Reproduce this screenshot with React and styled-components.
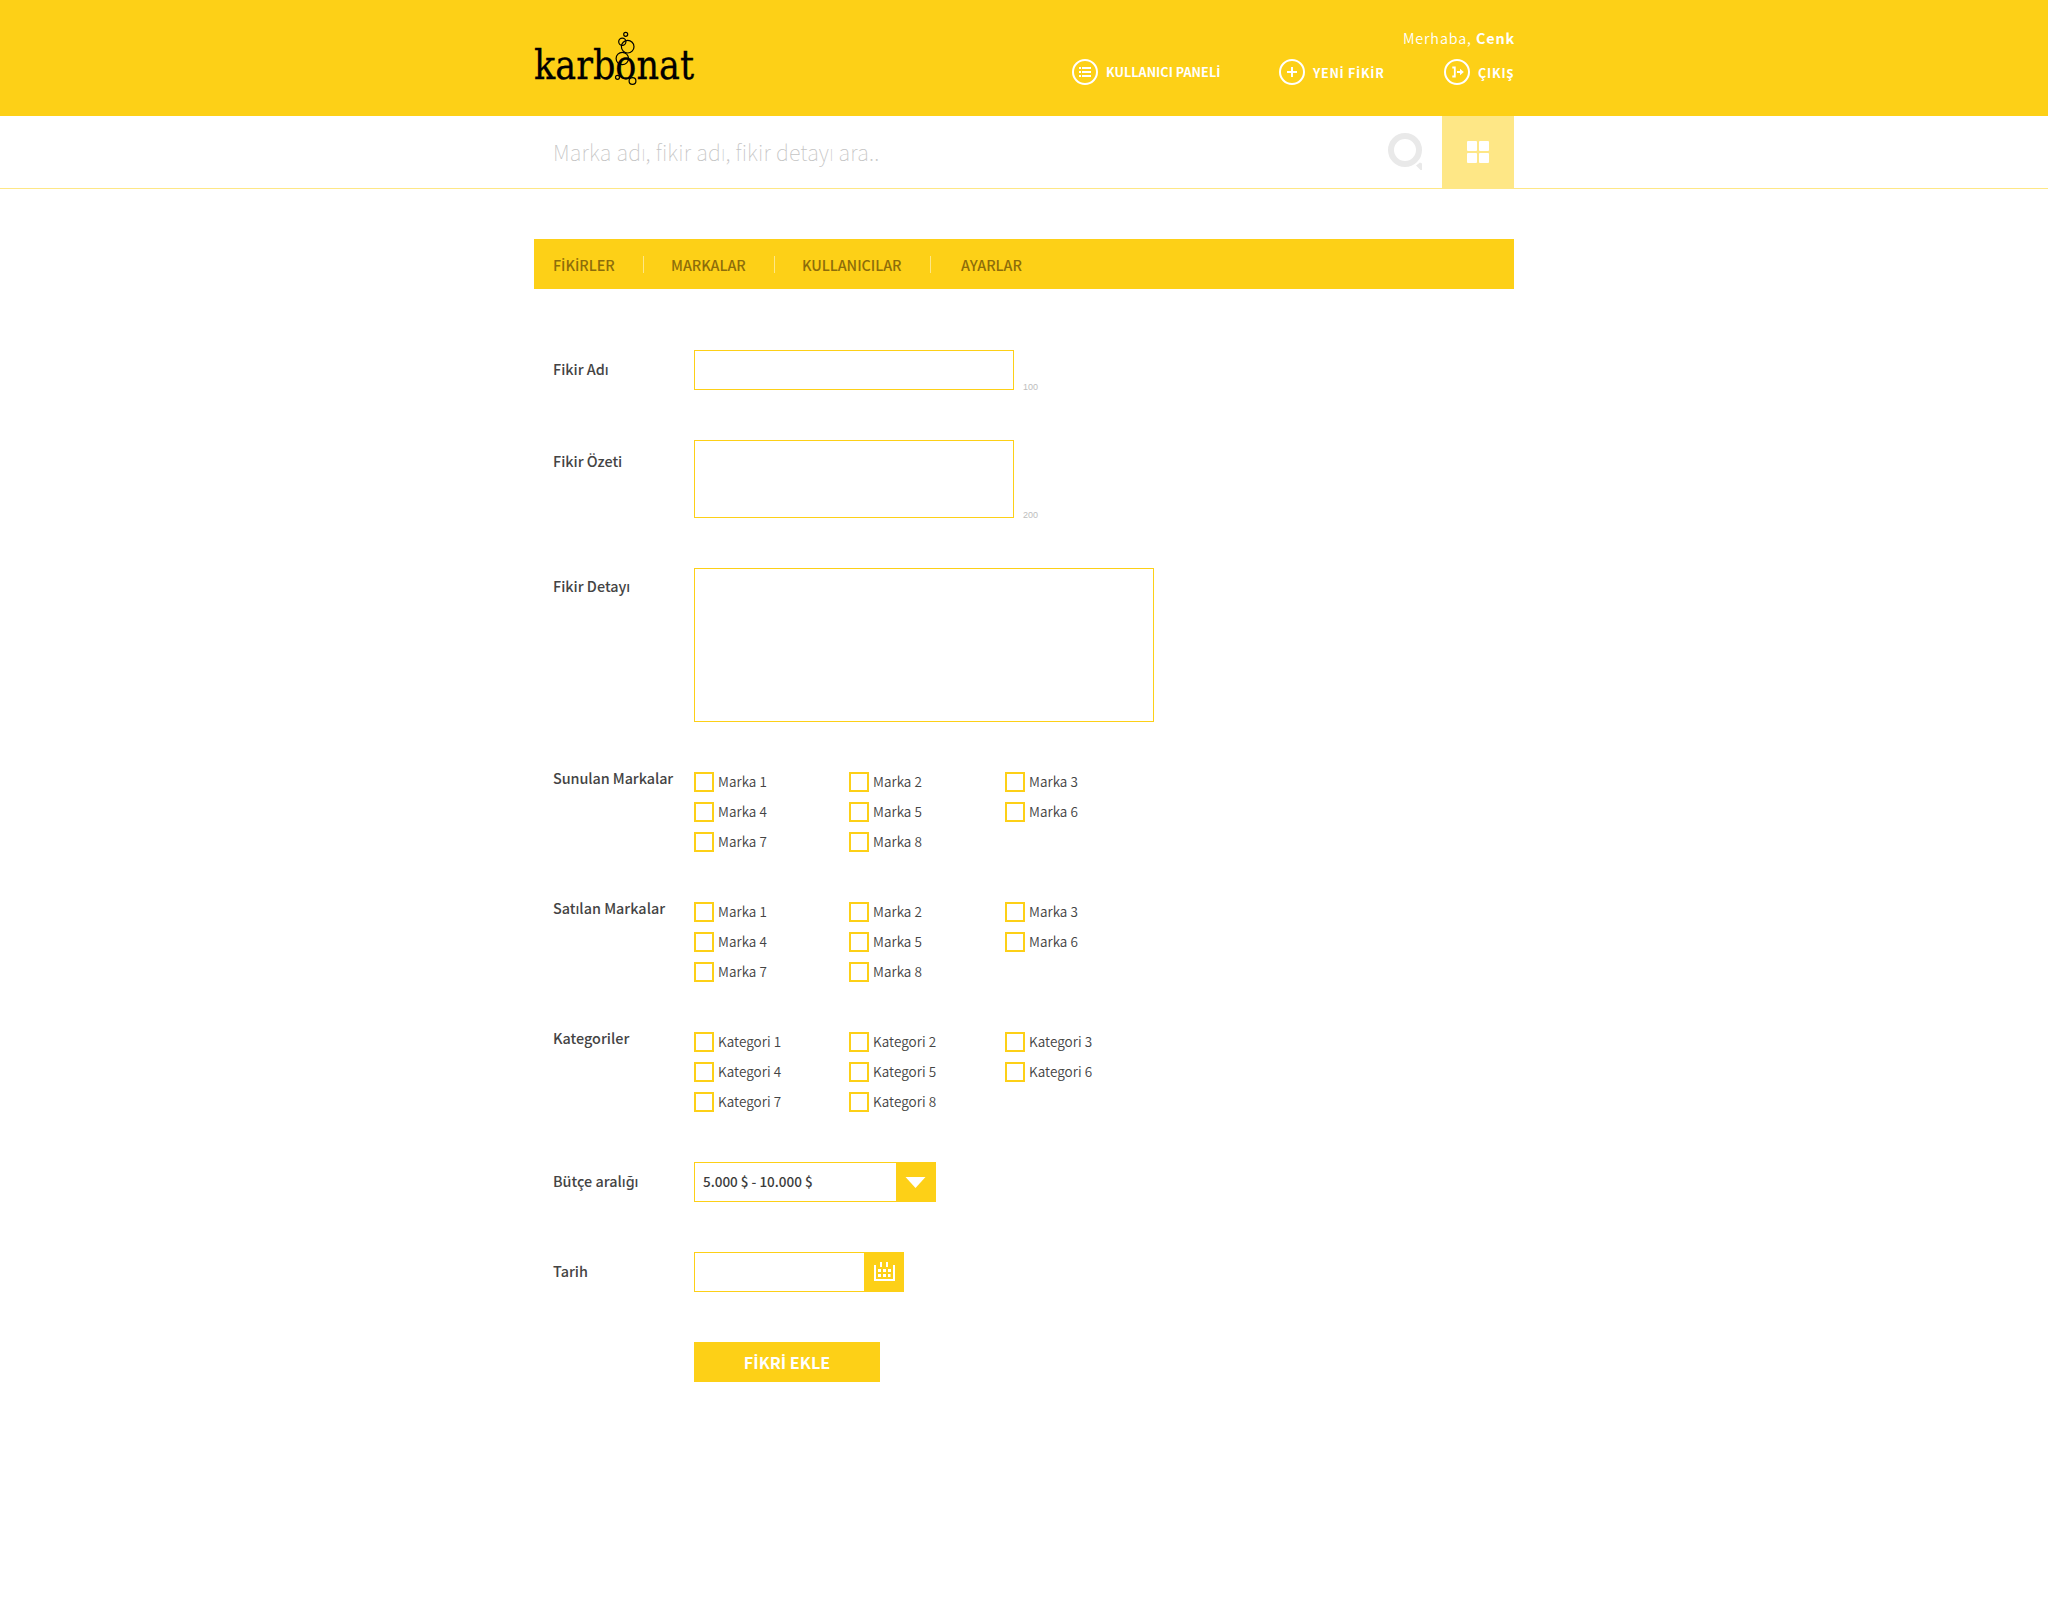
import React from "react";
import styled, { createGlobalStyle } from "styled-components";

const yellow = "#fdd017";
const paleYellow = "#fee786";
const sans = `"Noto Sans CJK SC", "Noto Sans", sans-serif`;

const GlobalStyle = createGlobalStyle`
  * { box-sizing: border-box; }
  body { margin: 0; background: #fff; color: #444; font-family: ${sans}; }
  ul { list-style: none; margin: 0; padding: 0; }
  button, input, textarea { font-family: inherit; border-radius: 0; outline: none; }
`;

const Page = styled.div`
  min-height: 1600px;
  background: #fff;
`;

const Header = styled.header`
  height: 116px;
  background: ${yellow};
`;

const Container = styled.div`
  width: 980px;
  margin: 0 auto;
  display: flex;
  justify-content: space-between;
`;

const Logo = styled.svg`
  width: 170px;
  height: 80px;
  margin: 20px 0 0 -4px;
  overflow: visible;
  text {
    font-family: "DejaVu Serif", serif;
    font-size: 40.5px;
    stroke: #000;
    stroke-width: 0.3px;
  }
`;

const UserArea = styled.div`
  width: 442px;
  padding-top: 28px;
`;

const Greeting = styled.div`
  text-align: right;
  color: #fff;
  font-size: 14.4px;
  font-weight: 350;
  line-height: 20px;
  letter-spacing: 0.85px;
  margin-right: -1px;
  b { font-weight: 700; }
`;

const UserLinks = styled.nav`
  display: grid;
  grid-template-columns: 207px 165px 70px;
  padding-top: 11px;
`;

const UserLink = styled.a`
  display: flex;
  align-items: center;
  gap: 8px;
  height: 26px;
  color: #fff;
  font-size: 12.6px;
  font-weight: 700;
  letter-spacing: ${(p) => p.$spacing};
  white-space: nowrap;
  svg { flex: none; width: 26px; height: 26px; }
`;

const LinkText = styled.span`
  line-height: 20px;
  padding-top: ${(p) => p.$drop || "0"};
`;

const DottedI = styled.span`
  font-family: "Open Sans", "Noto Sans", sans-serif;
  font-weight: 600;
  line-height: 1;
  b &, button &, ${UserLink} & { font-weight: 700; }
`;

const SearchBar = styled.div`
  height: 73px;
  border-bottom: 1px solid ${paleYellow};
`;

const SearchInput = styled.input`
  && { font-family: "Noto Sans CJK SC", Roboto, Inter, sans-serif; }
  flex: 1;
  height: 72px;
  border: 0;
  padding: 0 0 2px 19px;
  background: transparent;
  font-size: 21.6px;
  font-weight: 100;
  letter-spacing: 0.17px;
  &::placeholder { color: #c4c4c4; opacity: 1; }
`;

const SearchButton = styled.button`
  width: 72px;
  height: 72px;
  padding: 0;
  border: 0;
  background: transparent;
  svg { display: block; }
`;

const GridButton = styled.button`
  width: 72px;
  height: 73px;
  border: 0;
  padding: 25px;
  background: ${paleYellow};
  display: grid;
  grid-template-columns: 10px 10px;
  grid-template-rows: 10px 10px;
  gap: 2px;
  i { background: #fff; border-radius: 1px; }
`;

const Tabs = styled.nav`
  width: 980px;
  height: 50px;
  margin: 50px auto 0;
  padding-left: 19px;
  background: ${yellow};
  display: grid;
  grid-template-columns: 91px 131px 156px auto;
  align-items: center;
`;

const Tab = styled.a`
  height: 17px;
  display: flex;
  align-items: center;
  padding-left: ${(p) => p.$pad}px;
  border-right: ${(p) => (p.$last ? "0" : "1px solid #fee786")};
  color: #8d6d0a;
  font-size: 14.4px;
  font-weight: 500;
  line-height: 20px;
  white-space: nowrap;
  letter-spacing: -0.05px;
  > span { padding-top: 2px; }
`;

const Form = styled.form`
  width: 980px;
  margin: 61px auto 0;
  padding-left: 19px;
  display: flex;
  flex-direction: column;
`;

const Row = styled.div`
  display: grid;
  grid-template-columns: 141px 1fr;
  align-items: start;
  margin-bottom: 50px;
`;

const Label = styled.label`
  margin-top: ${(p) => p.$top}px;
  height: 30px;
  color: #444;
  font-size: 14.4px;
  font-weight: 500;
  line-height: 20px;
  letter-spacing: ${(p) => p.$spacing || "0"};
  white-space: nowrap;
`;

const Field = styled.div`
  display: flex;
  align-items: flex-end;
  gap: 9px;
`;

const TextArea = styled.textarea`
  display: block;
  width: ${(p) => p.$w}px;
  height: ${(p) => p.$h}px;
  border: 1px solid ${yellow};
  background: #fff;
  resize: none;
  padding: 8px;
`;

const Counter = styled.span`
  font: 9px/8px "Liberation Sans", Arial, sans-serif;
  height: 7px;
  color: #bdbdbd;
`;

const CheckGrid = styled.ul`
  display: grid;
  grid-template-columns: 155px 156px 155px;
  row-gap: 10px;
`;

const CheckItem = styled.li`
  display: flex;
  align-items: center;
  gap: 4px;
  height: 20px;
  color: #444;
  font-size: 13.5px;
  font-weight: 350;
  letter-spacing: 0.05px;
`;

const CheckText = styled.span`
  line-height: 20px;
  padding-bottom: 2px;
`;

const CheckBox = styled.span`
  width: 20px;
  height: 20px;
  border: 2px solid ${yellow};
`;

const Combo = styled.div`
  display: flex;
  width: ${(p) => p.$w}px;
  height: 40px;
  border: 1px solid ${yellow};
`;

const ComboValue = styled.span`
  flex: 1;
  padding-left: 8px;
  color: #3c3c3c;
  font-size: 13.5px;
  font-weight: 500;
  line-height: 36px;
`;

const ComboButton = styled.button`
  width: 39px;
  height: 38px;
  border: 0;
  padding: 0;
  background: ${yellow};
  svg { display: block; }
`;

const Submit = styled.button`
  width: 186px;
  height: 40px;
  margin-left: 141px;
  border: 0;
  background: ${yellow};
  color: #fff;
  font-size: 16.2px;
  font-weight: 700;
  line-height: 20px;
`;

const Ring = () => <circle cx="13" cy="13" r="12" fill="none" stroke="#fff" strokeWidth="2" />;

const Caps = ({ children }) => (
  <>
    {children.split(/(İ)/).map((part, i) => (part === "İ" ? <DottedI key={i}>İ</DottedI> : part))}
  </>
);

const brands = [1, 2, 3, 4, 5, 6, 7, 8].map((n) => `Marka ${n}`);
const categories = [1, 2, 3, 4, 5, 6, 7, 8].map((n) => `Kategori ${n}`);

const Checks = ({ items }) => (
  <CheckGrid>
    {items.map((t) => (
      <CheckItem key={t}>
        <CheckBox />
        <CheckText>{t}</CheckText>
      </CheckItem>
    ))}
  </CheckGrid>
);

export default function App() {
  return (
    <Page>
      <GlobalStyle />
      <Header>
        <Container>
          <Logo viewBox="0 0 170 80" aria-label="karbonat">
            <text x="4" y="59" textLength="160" lengthAdjust="spacingAndGlyphs">karbonat</text>
            <g fill="none" stroke="#000" strokeWidth="1.2">
              <circle cx="95.7" cy="14.3" r="2" />
              <circle cx="92.3" cy="21.7" r="3.6" />
              <circle cx="97.7" cy="26.7" r="6.3" />
              <circle cx="92.3" cy="38.5" r="6.2" />
              <circle cx="87.5" cy="57.3" r="2" />
              <circle cx="102.5" cy="61" r="3.4" />
            </g>
          </Logo>
          <UserArea>
            <Greeting>
              Merhaba, <b>Cenk</b>
            </Greeting>
            <UserLinks>
              <UserLink $spacing="0.05px">
                <svg viewBox="0 0 26 26">
                  <Ring />
                  <path d="M7 9h2M7 13h2M7 17h2M10 9h9M10 13h9M10 17h9" stroke="#fff" strokeWidth="2" />
                </svg>
                <LinkText>
                  <Caps>KULLANICI PANELİ</Caps>
                </LinkText>
              </UserLink>
              <UserLink $spacing="0.7px">
                <svg viewBox="0 0 26 26">
                  <Ring />
                  <path d="M13 8v10M8 13h10" stroke="#fff" strokeWidth="2" />
                </svg>
                <LinkText $drop="2px">
                  <Caps>YENİ FİKİR</Caps>
                </LinkText>
              </UserLink>
              <UserLink $spacing="0.8px">
                <svg viewBox="0 0 26 26">
                  <Ring />
                  <path d="M8.3 8.500h2.500v9h-2.500M13 13h4" fill="none" stroke="#fff" strokeWidth="1.8" />
                  <path d="M16 9.800l3.800 3.200-3.800 3.200z" fill="#fff" />
                </svg>
                <LinkText $drop="2px">ÇIKIŞ</LinkText>
              </UserLink>
            </UserLinks>
          </UserArea>
        </Container>
      </Header>

      <SearchBar>
        <Container>
          <SearchInput placeholder="Marka adı, fikir adı, fikir detayı ara.." />
          <SearchButton type="button" aria-label="Ara">
            <svg width="72" height="72" viewBox="0 0 72 72">
              <circle cx="35" cy="34" r="14" fill="none" stroke="#e9e9e9" strokeWidth="6" />
              <path d="M46 49.500l4-3 2 1v6.500h-1.500z" fill="#e9e9e9" />
            </svg>
          </SearchButton>
          <GridButton type="button" aria-label="Izgara">
            <i />
            <i />
            <i />
            <i />
          </GridButton>
        </Container>
      </SearchBar>

      <Tabs>
        <Tab $pad={0}>
          <span>
            <Caps>FİKİRLER</Caps>
          </span>
        </Tab>
        <Tab $pad={27}>
          <span>MARKALAR</span>
        </Tab>
        <Tab $pad={27}>
          <span>KULLANICILAR</span>
        </Tab>
        <Tab $pad={30} $last>
          <span>AYARLAR</span>
        </Tab>
      </Tabs>

      <Form>
        <Row>
          <Label $top={9}>Fikir Adı</Label>
          <Field>
            <TextArea $w={320} $h={40} />
            <Counter>100</Counter>
          </Field>
        </Row>
        <Row>
          <Label $top={11}>Fikir Özeti</Label>
          <Field>
            <TextArea $w={320} $h={78} />
            <Counter>200</Counter>
          </Field>
        </Row>
        <Row>
          <Label $top={8}>Fikir Detayı</Label>
          <TextArea $w={460} $h={154} />
        </Row>
        <Row>
          <Label $top={-4} $spacing="-0.07px">Sunulan Markalar</Label>
          <Checks items={brands} />
        </Row>
        <Row>
          <Label $top={-4}>Satılan Markalar</Label>
          <Checks items={brands} />
        </Row>
        <Row>
          <Label $top={-4}>Kategoriler</Label>
          <Checks items={categories} />
        </Row>
        <Row>
          <Label $top={9}>Bütçe aralığı</Label>
          <Combo $w={242}>
            <ComboValue>5.000 $ - 10.000 $</ComboValue>
            <ComboButton type="button" aria-label="Seç">
              <svg width="39" height="38" viewBox="0 0 39 38">
                <path d="M9.500 14h20l-10 11z" fill="#fff" />
              </svg>
            </ComboButton>
          </Combo>
        </Row>
        <Row>
          <Label $top={9}>Tarih</Label>
          <Combo $w={210}>
            <ComboValue />
            <ComboButton type="button" aria-label="Takvim">
              <svg width="39" height="38" viewBox="0 0 39 38" fill="none" stroke="#fff">
                <path d="M11 12v15h19v-15" strokeWidth="2" />
                <path d="M17 9v5M23 9v5" strokeWidth="2" />
                <path d="M14 17.500h3M19 17.500h3M24 17.500h3M14 22.500h3M19 22.500h3M24 22.500h2.500" strokeWidth="3" />
              </svg>
            </ComboButton>
          </Combo>
        </Row>
        <Submit type="button">
          <Caps>FİKRİ EKLE</Caps>
        </Submit>
      </Form>
    </Page>
  );
}
